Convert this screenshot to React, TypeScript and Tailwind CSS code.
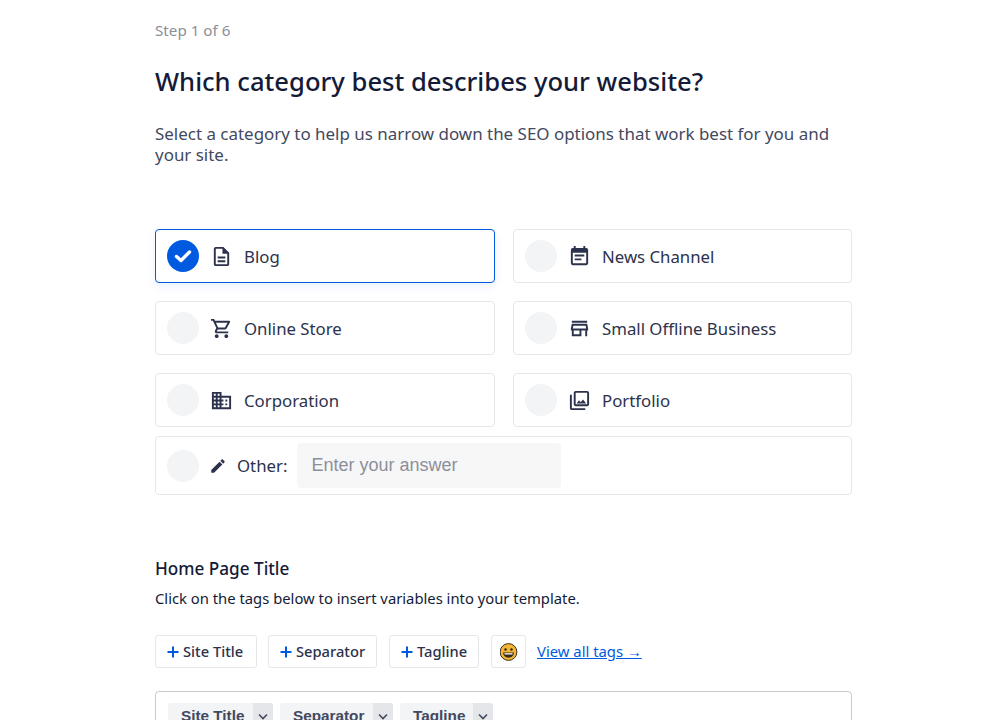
const ICONS: Record<string, string> = {
  blog: "M8 16h8v2H8zm0-4h8v2H8zm6-10H6c-1.1 0-2 .9-2 2v16c0 1.1.89 2 1.99 2H18c1.1 0 2-.9 2-2V8l-6-6zm4 18H6V4h7v5h5v11z",
  news: "M17 10H7v2h10v-2zm2-7h-1V1h-2v2H8V1H6v2H5c-1.11 0-1.99.9-1.99 2L3 19c0 1.1.89 2 2 2h14c1.1 0 2-.9 2-2V5c0-1.1-.9-2-2-2zm0 16H5V8h14v11zm-5-5H7v2h7v-2z",
  cart: "M15.55 13c.75 0 1.41-.41 1.75-1.03l3.58-6.49c.37-.66-.11-1.48-.87-1.48H5.21l-.94-2H1v2h2l3.6 7.59-1.35 2.44C4.52 15.37 5.48 17 7 17h12v-2H7l1.1-2h7.45zM6.16 6h12.15l-2.76 5H8.53L6.16 6zM7 18c-1.1 0-1.99.9-1.99 2S5.9 22 7 22s2-.9 2-2-.9-2-2-2zm10 0c-1.1 0-1.99.9-1.99 2s.89 2 1.99 2 2-.9 2-2-.9-2-2-2z",
  store: "M18.36 9l.6 3H5.04l.6-3h12.72M20 4H4v2h16V4zm0 3H4l-1 5v2h1v6h10v-6h4v6h2v-6h1v-2l-1-5zM6 18v-4h6v4H6z",
  corp: "M12 7V3H2v18h20V7H12zM6 19H4v-2h2v2zm0-4H4v-2h2v2zm0-4H4V9h2v2zm0-4H4V5h2v2zm4 12H8v-2h2v2zm0-4H8v-2h2v2zm0-4H8V9h2v2zm0-4H8V5h2v2zm10 12h-8v-2h2v-2h-2v-2h2v-2h-2V9h8v10zm-2-8h-2v2h2v-2zm0 4h-2v2h2v-2z",
  photo: "M20 4v12H8V4h12m0-2H8c-1.1 0-2 .9-2 2v12c0 1.1.9 2 2 2h12c1.1 0 2-.9 2-2V4c0-1.1-.9-2-2-2zm-8.5 9.67l1.69 2.26 2.48-3.1L19 15H9zM2 6v14c0 1.1.9 2 2 2h14v-2H4V6H2z",
  edit: "M3 17.25V21h3.75L17.81 9.94l-3.75-3.75L3 17.25zM20.71 7.04c.39-.39.39-1.02 0-1.41l-2.34-2.34c-.39-.39-1.02-.39-1.41 0l-1.83 1.83 3.75 3.75 1.83-1.83z",
};

function Icon({ name, size = 23 }: { name: string; size?: number }) {
  return (
    <svg width={size} height={size} viewBox="0 0 24 24" fill="#2c324c" className="shrink-0 block">
      <path d={ICONS[name]} />
    </svg>
  );
}

function Radio({ checked }: { checked?: boolean }) {
  if (checked) {
    return (
      <span className="w-8 h-8 rounded-full bg-[#005ae0] flex items-center justify-center shrink-0">
        <svg width="20" height="20" viewBox="0 0 20 20" fill="none">
          <path d="M3.5 10.5l4.5 4 8.5-8.5" stroke="#fff" strokeWidth="3.4" strokeLinecap="round" strokeLinejoin="round" />
        </svg>
      </span>
    );
  }
  return <span className="w-8 h-8 rounded-full bg-[#f3f4f5] shrink-0" />;
}

function Option({ icon, label, checked }: { icon: string; label: string; checked?: boolean }) {
  return (
    <div
      className={
        checked
          ? "h-[54px] flex items-center pl-[11px] rounded-[4px] border border-[#005ae0] bg-white shadow-[0_4px_10px_rgba(0,90,224,0.08)]"
          : "h-[54px] flex items-center pl-[11px] rounded-[4px] border border-[#e5e7eb] bg-white"
      }
    >
      <Radio checked={checked} />
      <span className="ml-[11px]"><Icon name={icon} /></span>
      <span className="ml-[11px] mt-px text-[16.8px] leading-[24px] text-[#2c324c]">{label}</span>
    </div>
  );
}

function Tag({ label, w }: { label: string; w: string }) {
  return (
    <button className={`${w} h-[33px] pl-[11px] flex items-center gap-[4px] bg-white border border-[#e5e7eb] rounded-[3px] text-[14.7px] font-medium text-[#2c324c]`}>
      <svg width="12" height="12" viewBox="0 0 12 12" className="shrink-0">
        <path d="M5 0.5h2v4.5h4.5v2H7v4.5H5V7H0.5V5H5z" fill="#005ae0" />
      </svg>
      {label}
    </button>
  );
}

function Chip({ label, w }: { label: string; w: string }) {
  return (
    <span className="h-[26px] flex rounded-[3px] overflow-hidden bg-[#f3f4f5]">
      <span className={`${w} pl-[13px] text-[15.3px] leading-[26px] font-bold text-[#434960] font-['Liberation_Sans',sans-serif]`}>{label}</span>
      <span className="w-[20px] bg-[#e5e6e9] flex items-center justify-center">
        <svg width="12" height="12" viewBox="0 0 12 12" fill="none">
          <path d="M2 4.5l4 4 4-4" stroke="#434960" strokeWidth="1.6" />
        </svg>
      </span>
    </span>
  );
}

export default function App() {
  return (
    <div className="h-[720px] overflow-hidden bg-white pl-[155px] font-['Noto_Sans',sans-serif]">
      <div className="w-[697px] pt-[20px]">
        <div className="text-[15.2px] leading-[21px] text-[#8c8f9a]">Step 1 of 6</div>
        <h1 className="mt-[23px] text-[25.6px] leading-[36px] font-medium text-[#141b38]">Which category best describes your website?</h1>
        <p className="mt-[23px] text-[16.95px] leading-[21px] text-[#434960]">
          Select a category to help us narrow down the SEO options that work best for you and your site.
        </p>

        <div className="mt-[64px] grid grid-cols-[340px_339px] gap-x-[18px] gap-y-[18px]">
          <Option icon="blog" label="Blog" checked />
          <Option icon="news" label="News Channel" />
          <Option icon="cart" label="Online Store" />
          <Option icon="store" label="Small Offline Business" />
          <Option icon="corp" label="Corporation" />
          <Option icon="photo" label="Portfolio" />
        </div>

        <div className="mt-[9px] h-[59px] flex items-center pl-[11px] rounded-[4px] border border-[#e5e7eb] bg-white">
          <Radio />
          <span className="ml-[10px]"><Icon name="edit" size={18} /></span>
          <span className="ml-[10px] text-[16.8px] leading-[24px] text-[#2c324c]">Other:</span>
          <div className="ml-[10px] w-[264px] h-[45px] flex items-center pl-[14px] rounded-[4px] bg-[conic-gradient(#f3f4f5_25%,#f9f9fa_0_50%,#f3f4f5_0_75%,#f9f9fa_0)] bg-[length:2px_2px] text-[18px] text-[#8c8f9a] font-['Liberation_Sans',sans-serif]">
            Enter your answer
          </div>
        </div>

        <h2 className="mt-[62px] text-[17.15px] leading-[24px] font-medium text-[#141b38]">Home Page Title</h2>
        <p className="mt-[7px] text-[14.8px] leading-[21px] text-[#141b38]">Click on the tags below to insert variables into your template.</p>

        <div className="mt-[26px] flex items-center">
          <Tag label="Site Title" w="w-[102px]" />
          <span className="ml-[11px]"><Tag label="Separator" w="w-[109px]" /></span>
          <span className="ml-[12px]"><Tag label="Tagline" w="w-[90px]" /></span>
          <span className="ml-[12px] w-[35px] h-[33px] flex items-center justify-center bg-white border border-[#e5e7eb] rounded-[3px]">
            <svg width="18" height="18" viewBox="0 0 18 18">
              <circle cx="8.5" cy="9" r="8.4" fill="#f2b632" stroke="#3a3020" strokeWidth="1" />
              <circle cx="5.5" cy="6.5" r="1.2" fill="#2c2416" />
              <circle cx="11.5" cy="6.5" r="1.2" fill="#2c2416" />
              <path d="M3.1 9.5h10.8c0 3.2-2.4 5.2-5.4 5.2S3.1 12.7 3.1 9.5z" fill="#3a2a18" />
              <path d="M4.5 10.2h8v1.3h-8z" fill="#fff" />
            </svg>
          </span>
          <a className="ml-[11px] text-[14.85px] text-[#005ae0] underline">View all tags →</a>
        </div>

        <div className="mt-[23px] h-[80px] rounded-[4px] border border-[#c9c9d2] bg-white pt-[11px] pl-[12px] flex items-start gap-[7px]">
          <Chip label="Site Title" w="w-[85px]" />
          <Chip label="Separator" w="w-[93px]" />
          <Chip label="Tagline" w="w-[73px]" />
        </div>
      </div>
    </div>
  );
}
